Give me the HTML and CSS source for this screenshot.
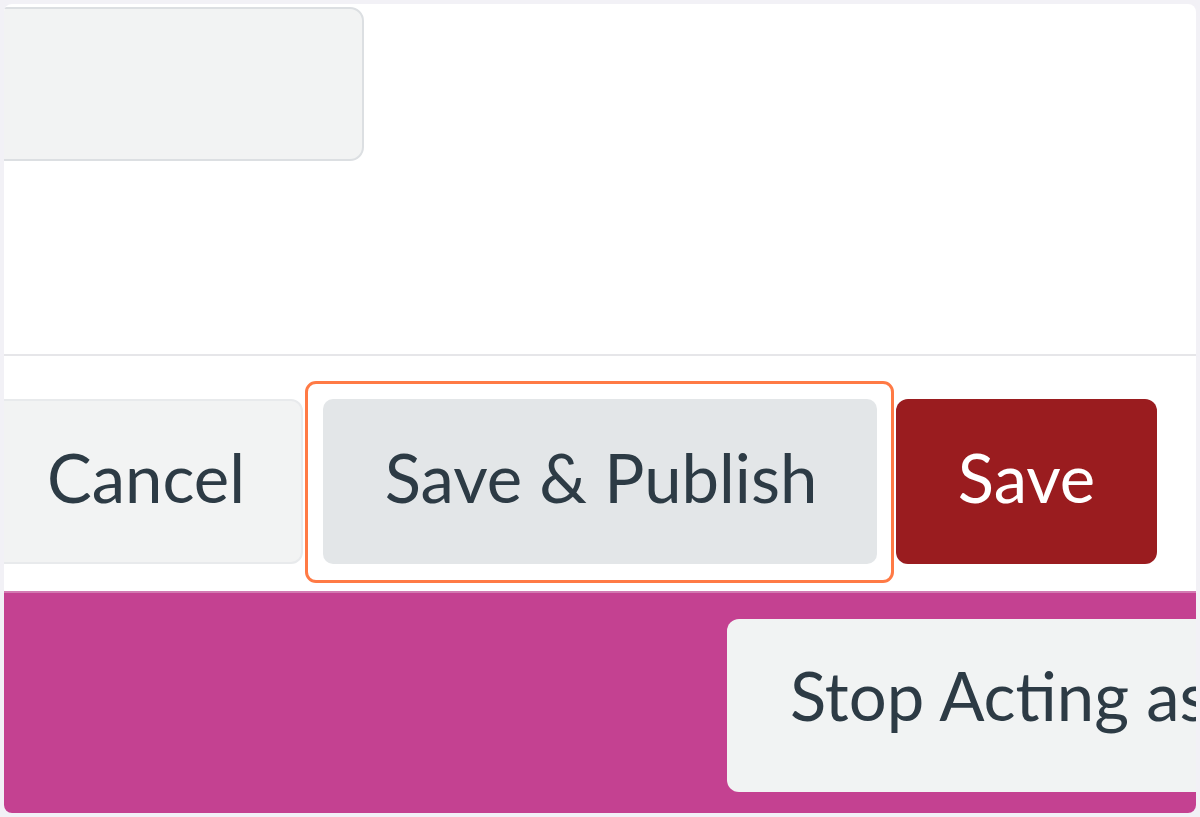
FILE: index.html
```html
<!DOCTYPE html>
<html>
<head>
<meta charset="utf-8">
<link rel="stylesheet" href="styles.css">
</head>
<body>
<div class="panel">
  <div class="field"></div>
  <div class="footer">
    <div class="actions">
      <button class="btn btn-default">Cancel</button>
      <button class="btn btn-publish">Save &amp; Publish<span class="highlight"></span></button>
      <button class="btn btn-primary">Save</button>
    </div>
  </div>
  <div class="masquerade">
    <button class="btn btn-stop">Stop Acting as User</button>
  </div>
</div>
</body>
</html>
```

FILE: styles.css
```css
html, body {
  margin: 0;
  padding: 0;
  background: #f2f1f6;
  height: 817px;
  overflow: hidden;
}
body {
  padding: 4px;
  box-sizing: border-box;
  font-family: Lato, "Noto Sans", sans-serif;
}
.panel {
  background: #ffffff;
  height: 809px;
  border-radius: 8px;
  overflow: hidden;
  display: flex;
  flex-direction: column;
}
.field {
  margin: 3px 0 0 -44px;
  width: 400px;
  height: 150px;
  background: #f2f3f3;
  border: 2px solid #dcdfe2;
  border-radius: 14px;
  flex: none;
}
.footer {
  margin-top: 193px;
  border-top: 2px solid #e6e6e9;
  padding: 43px 39px 27px 0;
  flex: none;
}
.actions {
  display: flex;
  justify-content: flex-end;
  gap: 19px;
}
.btn {
  font-family: Lato, "Noto Sans", sans-serif;
  font-size: 67px;
  color: #2d3b45;
  height: 165px;
  border: none;
  border-radius: 12px;
  padding: 0 62px 10px;
  white-space: nowrap;
  flex: none;
  position: relative;
}
.btn-default {
  background: #f2f3f3;
  border: 2px solid #e8eaec;
  padding: 0 56px 10px 62px;
  margin-right: 1px;
}
.btn-publish {
  background: #e3e6e8;
  border-radius: 10px;
  width: 554px;
  padding: 0 0 10px 2px;
}
.btn-primary {
  background: #9a1c1f;
  color: #ffffff;
  width: 261px;
  padding: 0 0 10px;
}
.highlight {
  position: absolute;
  top: -18px;
  left: -18px;
  right: -17px;
  bottom: -19px;
  border: 3px solid #ff7a45;
  border-radius: 11px;
}
.masquerade {
  flex: 1;
  background: #c44191;
  border-top: 2px solid #d37ab2;
  padding: 26px 0 0 723px;
  display: flex;
  overflow: hidden;
}
.btn-stop {
  background: #f1f3f3;
  height: 173px;
  padding: 0 62px 22px 63px;
  border-radius: 12px;
  min-width: 700px;
  text-align: left;
}
```
